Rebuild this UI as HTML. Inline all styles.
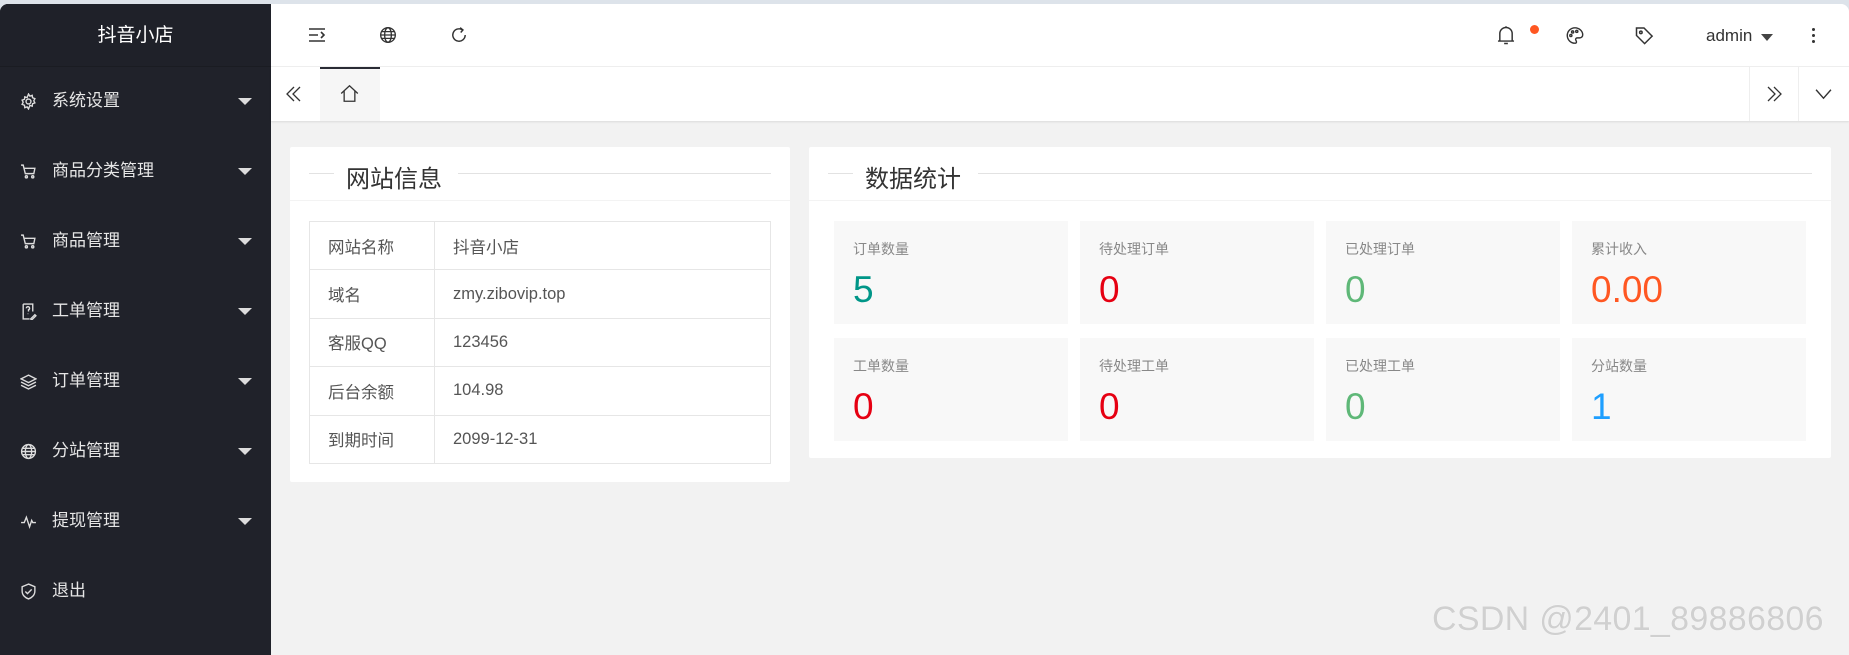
<!DOCTYPE html>
<html><head><meta charset="utf-8"><style>
*{margin:0;padding:0;box-sizing:border-box}
body{width:1849px;height:655px;overflow:hidden;background:#dde3ea;font-family:"Liberation Sans","Noto Sans CJK SC",sans-serif;position:relative}
.wrap{position:absolute;left:0;top:4px;width:1849px;height:651px;background:#f2f2f2;border-radius:8px 8px 0 0;overflow:hidden}
.side{position:absolute;left:0;top:0;width:271px;height:651px;background:#20222a}
.logo{height:63px;line-height:63px;text-align:center;color:#fff;font-size:19px;background:#1f2129;border-bottom:1px solid #1a1c22}
.mi{position:absolute;left:0;width:271px;height:40px;line-height:40px;color:#e6e6e6;font-size:17px;padding-left:52px}
.mi svg{position:absolute;left:20px;top:12px}
.mi .ar{position:absolute;left:238px;top:17px;width:0;height:0;border-left:7px solid transparent;border-right:7px solid transparent;border-top:7px solid #ddd}
.top{position:absolute;left:271px;top:0;right:0;height:63px;background:#fff;border-bottom:1px solid #f0f0f0}
.tabs{position:absolute;left:271px;top:63px;right:0;height:54px;background:#fff;box-shadow:0 1px 2px rgba(0,0,0,.1)}
.card{position:absolute;background:#fff;border-radius:2px}
.ch{height:54px;border-bottom:1px solid #f3f3f3;position:relative}
.ch .ln{position:absolute;top:26px;height:1px;background:#e2e2e2}
.ch span{position:absolute;top:12px;font-size:24px;color:#333}
table{position:absolute;left:19px;top:74px;width:462px;border-collapse:collapse;font-size:16.5px;color:#555}
td{border:1px solid #e6e6e6;height:48.4px;padding-left:18px}
.sb{position:absolute;width:234px;height:103px;background:#f8f8f8}
.sb .l{position:absolute;left:19px;top:18px;font-size:14px;color:#888}
.sb .n{position:absolute;left:19px;top:48px;font-size:37px}
.wm{position:absolute;left:1432px;top:600px;font-size:34px;color:#d0d0d0;text-shadow:0 0 1px #fff;letter-spacing:0.3px}
</style></head><body>
<div class="wrap">
<div class="side">
<div class="logo">抖音小店</div>
<div class="mi" style="top:77px"><svg width="17" height="17" viewBox="0 0 16 16" fill="none" stroke="#ddd" stroke-width="1.3"><circle cx="8" cy="8" r="2.3"/><path d="M8 1l1.3 2 2.2-.8.3 2.3 2.2.8-1 2 1 2-2.2.8-.3 2.3-2.2-.8L8 15l-1.3-2-2.2.8-.3-2.3-2.2-.8 1-2-1-2 2.2-.8.3-2.3 2.2.8z"/></svg>系统设置<i class="ar"></i></div>
<div class="mi" style="top:147px"><svg width="17" height="17" viewBox="0 0 16 16" fill="none" stroke="#ddd" stroke-width="1.3"><path d="M1 2h2l2 8h8l1-5H4"/><circle cx="6" cy="13" r="1"/><circle cx="12" cy="13" r="1"/></svg>商品分类管理<i class="ar"></i></div>
<div class="mi" style="top:217px"><svg width="17" height="17" viewBox="0 0 16 16" fill="none" stroke="#ddd" stroke-width="1.3"><path d="M1 2h2l2 8h8l1-5H4"/><circle cx="6" cy="13" r="1"/><circle cx="12" cy="13" r="1"/></svg>商品管理<i class="ar"></i></div>
<div class="mi" style="top:287px"><svg width="17" height="17" viewBox="0 0 16 16" fill="none" stroke="#ddd" stroke-width="1.3"><path d="M3 1h9v7M3 1v14h6"/><path d="M6 5a1.5 1.5 0 1 1 2 1.4V8M7.5 10v.5"/><path d="M10 15l4-4 1 1-4 4z"/></svg>工单管理<i class="ar"></i></div>
<div class="mi" style="top:357px"><svg width="17" height="17" viewBox="0 0 16 16" fill="none" stroke="#ddd" stroke-width="1.3"><path d="M8 2l7 3.5-7 3.5-7-3.5z"/><path d="M1 8.5l7 3.5 7-3.5M1 11.5l7 3.5 7-3.5"/></svg>订单管理<i class="ar"></i></div>
<div class="mi" style="top:427px"><svg width="17" height="17" viewBox="0 0 16 16" fill="none" stroke="#ddd" stroke-width="1.3"><circle cx="8" cy="8" r="6.5"/><ellipse cx="8" cy="8" rx="3" ry="6.5"/><path d="M1.5 8h13M2.5 5h11M2.5 11h11"/></svg>分站管理<i class="ar"></i></div>
<div class="mi" style="top:497px"><svg width="17" height="17" viewBox="0 0 16 16" fill="none" stroke="#ddd" stroke-width="1.3"><path d="M1 9h3l2-5 3 9 2-6 1 2h3"/></svg>提现管理<i class="ar"></i></div>
<div class="mi" style="top:567px"><svg width="17" height="17" viewBox="0 0 16 16" fill="none" stroke="#ddd" stroke-width="1.3"><path d="M8 1l6 2.5v4c0 4-3 6.5-6 7.5-3-1-6-3.5-6-7.5v-4z"/><path d="M5 8l2 2 4-4"/></svg>退出</div>
</div>
<div class="top">
<svg style="position:absolute;left:37px;top:23px" width="18" height="16" viewBox="0 0 18 16" fill="none" stroke="#333" stroke-width="1.6"><path d="M1 2h16M1 8h9M1 14h16M13 5l3 3-3 3"/></svg>
<svg style="position:absolute;left:108px;top:22px" width="18" height="18" viewBox="0 0 16 16" fill="none" stroke="#333" stroke-width="1.2"><circle cx="8" cy="8" r="6.5"/><ellipse cx="8" cy="8" rx="3" ry="6.5"/><path d="M1.5 8h13M2.5 5h11M2.5 11h11"/></svg>
<svg style="position:absolute;left:179px;top:22px" width="18" height="18" viewBox="0 0 16 16" fill="none" stroke="#333" stroke-width="1.3"><path d="M13.5 8A5.5 5.5 0 1 1 11 3.4"/><path d="M9 1.5l2.5 2-2 2.3"/></svg>
<svg style="position:absolute;left:1225px;top:21px" width="20" height="21" viewBox="0 0 16 17" fill="none" stroke="#333" stroke-width="1.2"><path d="M3 13V7a5 5 0 0 1 10 0v6zM1.5 13h13M6.5 15h3M8 1v1"/></svg>
<div style="position:absolute;left:1259px;top:21px;width:9px;height:9px;border-radius:50%;background:#ff5722"></div>
<svg style="position:absolute;left:1294px;top:22px" width="20" height="19" viewBox="0 0 16 16" fill="none" stroke="#333" stroke-width="1.2"><path d="M8 1.5a6.5 6.5 0 0 0 0 13c1.5 0 1.5-1.5.8-2.3-.8-1 0-2.2 1.2-2.2H12a2.5 2.5 0 0 0 2.5-2.5c0-3.3-3-6-6.5-6z"/><circle cx="4.5" cy="8" r=".9"/><circle cx="6" cy="5" r=".9"/><circle cx="9.5" cy="4.5" r=".9"/></svg>
<svg style="position:absolute;left:1363px;top:21px" width="20" height="21" viewBox="0 0 16 16" fill="none" stroke="#333" stroke-width="1.2"><path d="M2 2h6l6.5 6.5-6 6L2 8z"/><circle cx="5.5" cy="5.5" r="1"/></svg>
<div style="position:absolute;left:1435px;top:22px;font-size:17px;color:#333">admin</div>
<div style="position:absolute;left:1490px;top:30px;border-left:6px solid transparent;border-right:6px solid transparent;border-top:7px solid #444"></div>
<div style="position:absolute;left:1541px;top:24px;width:3px;height:3px;background:#333;border-radius:50%;box-shadow:0 6px 0 #333,0 12px 0 #333"></div>
</div>
<div class="tabs">
<svg style="position:absolute;left:14px;top:19px" width="18" height="16" viewBox="0 0 18 16" fill="none" stroke="#333" stroke-width="1.3"><path d="M9 1L2 8l7 7M15 1L8 8l7 7"/></svg>
<div style="position:absolute;left:49px;top:0;width:60px;height:54px;background:#f6f6f6;border-top:2px solid #292b34"></div>
<svg style="position:absolute;left:69px;top:17px" width="19" height="19" viewBox="0 0 16 16" fill="none" stroke="#333" stroke-width="1.1"><path d="M1 8L8 1.5 15 8M3.5 6v8.5h9V6"/></svg>
<div style="position:absolute;left:1478px;top:0;width:1px;height:54px;background:#eee"></div>
<div style="position:absolute;left:1527px;top:0;width:1px;height:54px;background:#eee"></div>
<svg style="position:absolute;left:1494px;top:19px" width="18" height="16" viewBox="0 0 18 16" fill="none" stroke="#333" stroke-width="1.3"><path d="M3 1l7 7-7 7M9 1l7 7-7 7"/></svg>
<svg style="position:absolute;left:1544px;top:21px" width="17" height="12" viewBox="0 0 16 10" fill="none" stroke="#333" stroke-width="1.3"><path d="M1 1l7 8 7-8"/></svg>
</div>
<div class="card" style="left:290px;top:143px;width:500px;height:335px">
<div class="ch"><i class="ln" style="left:19px;width:25px"></i><span style="left:56px">网站信息</span><i class="ln" style="left:168px;width:313px"></i></div>
<table>
<tr><td style="width:125px">网站名称</td><td>抖音小店</td></tr>
<tr><td>域名</td><td>zmy.zibovip.top</td></tr>
<tr><td>客服QQ</td><td>123456</td></tr>
<tr><td>后台余额</td><td>104.98</td></tr>
<tr><td>到期时间</td><td>2099-12-31</td></tr>
</table>
</div>
<div class="card" style="left:809px;top:143px;width:1022px;height:311px">
<div class="ch"><i class="ln" style="left:19px;width:25px"></i><span style="left:56px">数据统计</span><i class="ln" style="left:169px;width:834px"></i></div>
<div class="sb" style="left:25px;top:74px"><div class="l">订单数量</div><div class="n" style="color:#009688">5</div></div>
<div class="sb" style="left:271px;top:74px"><div class="l">待处理订单</div><div class="n" style="color:#e60012">0</div></div>
<div class="sb" style="left:517px;top:74px"><div class="l">已处理订单</div><div class="n" style="color:#5fb878">0</div></div>
<div class="sb" style="left:763px;top:74px"><div class="l">累计收入</div><div class="n" style="color:#ff5722">0.00</div></div>
<div class="sb" style="left:25px;top:191px"><div class="l">工单数量</div><div class="n" style="color:#e60012">0</div></div>
<div class="sb" style="left:271px;top:191px"><div class="l">待处理工单</div><div class="n" style="color:#e60012">0</div></div>
<div class="sb" style="left:517px;top:191px"><div class="l">已处理工单</div><div class="n" style="color:#5fb878">0</div></div>
<div class="sb" style="left:763px;top:191px"><div class="l">分站数量</div><div class="n" style="color:#1e9fff">1</div></div>
</div>
</div>
<div class="wm">CSDN @2401_89886806</div>
</body></html>
